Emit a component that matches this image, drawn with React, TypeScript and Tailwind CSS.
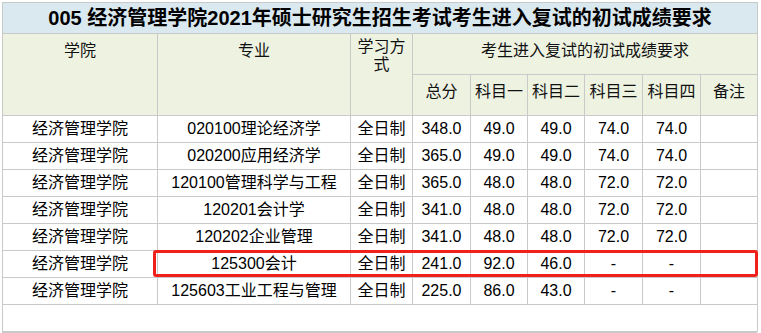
import React from 'react';

type Row = {
  college: string;
  major: string;
  mode: string;
  total: string;
  s1: string;
  s2: string;
  s3: string;
  s4: string;
  note?: string;
};

const rows: Row[] = [
  { college: '经济管理学院', major: '020100理论经济学', mode: '全日制', total: '348.0', s1: '49.0', s2: '49.0', s3: '74.0', s4: '74.0' },
  { college: '经济管理学院', major: '020200应用经济学', mode: '全日制', total: '365.0', s1: '49.0', s2: '49.0', s3: '74.0', s4: '74.0' },
  { college: '经济管理学院', major: '120100管理科学与工程', mode: '全日制', total: '365.0', s1: '48.0', s2: '48.0', s3: '72.0', s4: '72.0' },
  { college: '经济管理学院', major: '120201会计学', mode: '全日制', total: '341.0', s1: '48.0', s2: '48.0', s3: '72.0', s4: '72.0' },
  { college: '经济管理学院', major: '120202企业管理', mode: '全日制', total: '341.0', s1: '48.0', s2: '48.0', s3: '72.0', s4: '72.0' },
  { college: '经济管理学院', major: '125300会计', mode: '全日制', total: '241.0', s1: '92.0', s2: '46.0', s3: '-', s4: '-' },
  { college: '经济管理学院', major: '125603工业工程与管理', mode: '全日制', total: '225.0', s1: '86.0', s2: '43.0', s3: '-', s4: '-' },
];

const cell = 'border border-[#c9c9c9] text-center align-middle p-0 h-[27px] leading-[26px]';
const head = 'border border-[#c9c9c9] text-center align-top p-0 font-normal text-[#111]';

export default function App() {
  return (
    <div
      className="bg-white w-[761px] h-[333px] overflow-hidden pt-[2px] pl-[2px] text-[16px] text-black"
      style={{ fontFamily: '"Liberation Sans", "Noto Sans CJK SC", sans-serif' }}
    >
      <div className="relative w-[755px]">
        <table className="table-fixed border-collapse w-[755px]">
          <colgroup>
            <col className="w-[155px]" />
            <col className="w-[193px]" />
            <col className="w-[62px]" />
            <col className="w-[58px]" />
            <col className="w-[57px]" />
            <col className="w-[57px]" />
            <col className="w-[58px]" />
            <col className="w-[58px]" />
            <col className="w-[57px]" />
          </colgroup>
          <thead>
            <tr>
              <th
                colSpan={9}
                className="border border-[#c9c9c9] bg-[#dae8ef] h-[31px] p-0 text-[20px] font-bold leading-[30px] text-black"
              >
                005 经济管理学院2021年硕士研究生招生考试考生进入复试的初试成绩要求
              </th>
            </tr>
            <tr className="bg-[#eef3e1]">
              <th rowSpan={2} className={`${head} pt-[5px]`}>学院</th>
              <th rowSpan={2} className={`${head} pt-[5px]`}>专业</th>
              <th rowSpan={2} className={`${head} pt-[4px] leading-[18px] px-[3px]`}>学习方式</th>
              <th colSpan={6} className={`${head} h-[41px] pt-[5px]`}>考生进入复试的初试成绩要求</th>
            </tr>
            <tr className="bg-[#eef3e1]">
              {['总分', '科目一', '科目二', '科目三', '科目四', '备注'].map((t) => (
                <th key={t} className={`${head} h-[41px] pt-[5px]`}>{t}</th>
              ))}
            </tr>
          </thead>
          <tbody>
            {rows.map((r) => (
              <tr key={r.major}>
                <td className={cell}>{r.college}</td>
                <td className={cell}>{r.major}</td>
                <td className={cell}>{r.mode}</td>
                <td className={cell}>{r.total}</td>
                <td className={cell}>{r.s1}</td>
                <td className={cell}>{r.s2}</td>
                <td className={cell}>{r.s3}</td>
                <td className={cell}>{r.s4}</td>
                <td className={cell}>{r.note ?? ''}</td>
              </tr>
            ))}
            <tr>
              <td colSpan={9} className={cell} />
            </tr>
          </tbody>
        </table>
        {/* highlight around the 125300 row */}
        <div className="absolute left-[151px] top-[248px] w-[605px] h-[27px] border-[3px] border-[#f0201a] rounded-[3px] pointer-events-none" />
        <div className="h-[4px] bg-[#dae8ef] border-t border-[#c9c9c9]" />
      </div>
    </div>
  );
}
